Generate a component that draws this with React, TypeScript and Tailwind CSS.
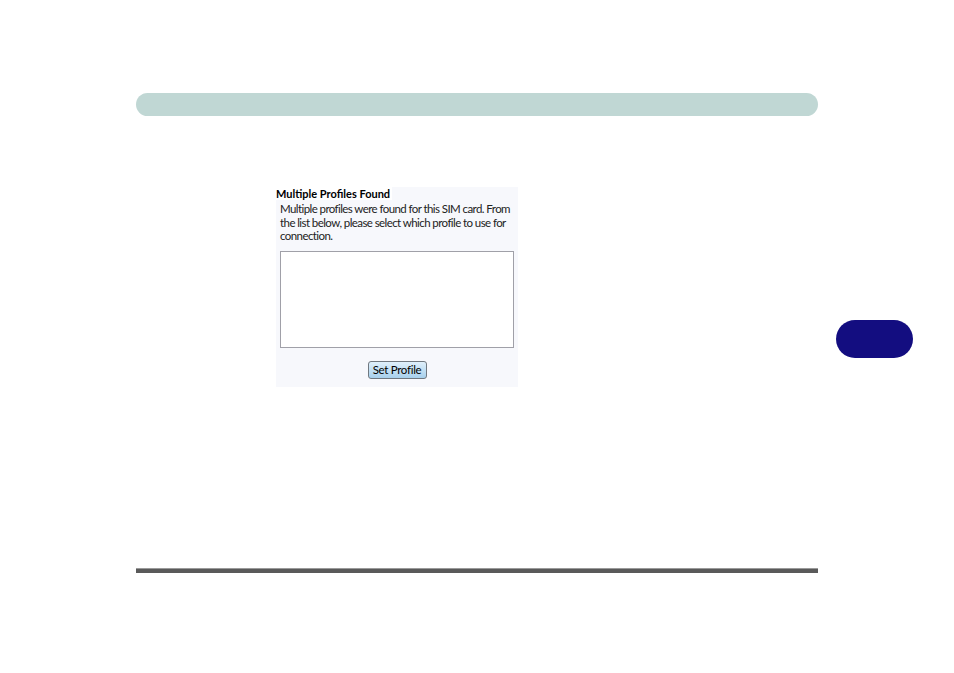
export default function App() {
  return (
    <div className="w-[954px] h-[673px] bg-white overflow-hidden" style={{ fontFamily: 'Lato, "Open Sans", sans-serif' }}>
      <div className="pt-[93px] pl-[136px]">
        <div className="w-[682px] h-[23px] rounded-full bg-[#c0d7d4]" />
      </div>
      <div className="flex items-start">
        <div className="ml-[276px] mt-[71px] w-[242px] h-[200px] bg-[#f7f8fc] flex flex-col">
          <div className="h-[13px] text-[11px] font-bold leading-[13px] text-black whitespace-nowrap"><span className="bg-white pr-[2px]">Multiple Profiles Found</span></div>
          <div className="pl-[4px] pt-[2px] text-[11.5px] leading-[13.5px] text-[#222] whitespace-nowrap tracking-[-0.58px]">
            Multiple profiles were found for this SIM card. From<br />
            the list below, please select which profile to use for<br />
            connection.
          </div>
          <div className="ml-[4px] mt-[8px] w-[234px] h-[97px] bg-white border border-[#a0a0a8]" />
          <div className="flex justify-center mt-[13px]">
            <div className="w-[59px] h-[18px] rounded-[3px] border border-[#707880] bg-gradient-to-b from-[#e0f0fb] to-[#a7d0ec] text-[11.5px] leading-[16px] text-center text-black whitespace-nowrap tracking-[-0.3px]">Set Profile</div>
          </div>
        </div>
        <div className="ml-[318px] mt-[204px] w-[77px] h-[38px] rounded-full bg-[#130d80]" />
      </div>
      <div className="ml-[136px] mt-[181px] w-[682px] h-[5px] bg-[#5a5a5a] border-t border-[#9a9a9a]" />
    </div>
  );
}
